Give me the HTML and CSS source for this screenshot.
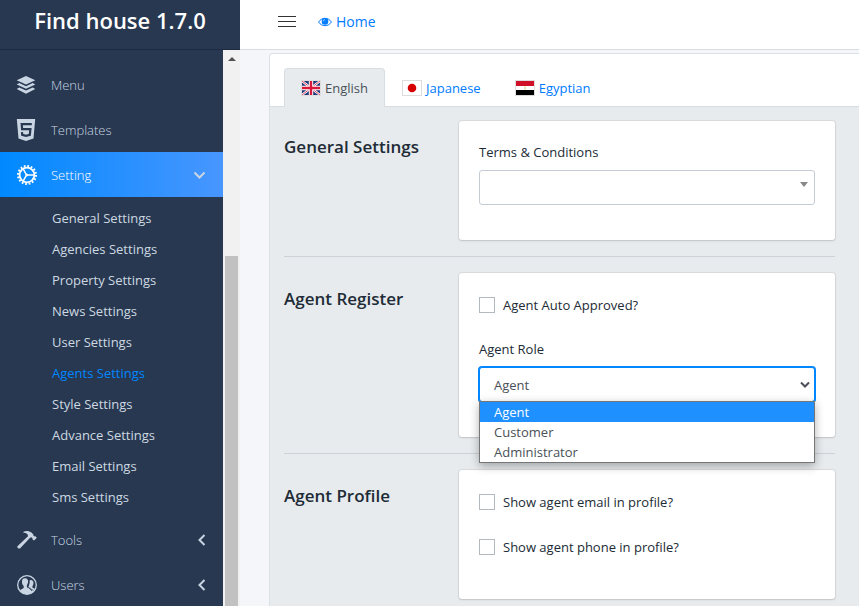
FILE: index.html
```html
<!DOCTYPE html>
<html lang="en">
<head>
<meta charset="utf-8">
<meta name="viewport" content="width=device-width, initial-scale=1">
<title>Find house 1.7.0</title>
<link rel="stylesheet" href="styles.css">
</head>
<body>
<div class="app">
  <aside class="sidebar">
    <a class="brand" href="#">Find house 1.7.0</a>
    <div class="sidebar-body">
      <nav class="nav">
        <a class="nav-item" href="#">
          <svg class="nav-icon" viewBox="0 0 20 20" fill="currentColor"><path d="M10 1l9.300 4.300L10 9.600.7 5.300zM3.300 8L10 11.200 16.700 8l2.600 1.500L10 13.800.7 9.500zM3.300 12.400L10 15.500l6.700-3.100 2.600 1.500L10 18.800.7 13.900z"/></svg>
          <span>Menu</span>
        </a>
        <a class="nav-item" href="#">
          <svg class="nav-icon" viewBox="0 0 20 22"><path fill="currentColor" d="M.8 0h18.400l-1.700 19.400L10 22l-7.500-2.600z"/><path fill="none" stroke="#273850" stroke-width="2.200" d="M15.800 5.200H5.700l.4 4.900h8.300l-.6 5.700-3.800 1.100-3.800-1.100-.2-2.600"/></svg>
          <span>Templates</span>
        </a>
        <a class="nav-item active" href="#">
          <svg class="nav-icon" viewBox="-1 0 20 20" fill="none" stroke="currentColor" overflow="visible"><circle cx="10" cy="10" r="7.400" stroke-width="1.800"/><circle cx="10" cy="10" r="9" stroke-width="2" stroke-dasharray="1.770 1.770"/><path stroke-width="1.500" d="M10.500 10H17M9.500 10L6.300 4.200M9.500 10l-3.200 5.800"/><circle cx="9.800" cy="10" r="1" fill="currentColor"/></svg>
          <span>Setting</span>
          <svg class="caret" viewBox="0 0 12 12"><path d="M-.5 3.500l5 5 5-5"/></svg>
        </a>
        <div class="subnav">
          <a href="#">General Settings</a>
          <a href="#">Agencies Settings</a>
          <a href="#">Property Settings</a>
          <a href="#">News Settings</a>
          <a href="#">User Settings</a>
          <a class="current" href="#">Agents Settings</a>
          <a href="#">Style Settings</a>
          <a href="#">Advance Settings</a>
          <a href="#">Email Settings</a>
          <a href="#">Sms Settings</a>
        </div>
        <a class="nav-item" href="#">
          <svg class="nav-icon" viewBox="-1 0 20 20" fill="currentColor" overflow="visible"><path d="M6.200 1.900C8.500.4 12 .5 14.500 2.600l1.800 1.900c.3.900.2 1.300.5 1.700.8.300 1.300 0 1.800.3l1.200 1.300-2.700 2.800-1.500-1.200c-.2-.8 0-1.200-.5-1.700-.6-.4-1.200-.2-1.800-.1L3.200 18.200c-.9.700-2.300.4-2.900-.9-.2-.5 0-1 .4-1.400L11 6.200c.2-1.900-1.200-3.500-4.800-3.800z"/></svg>
          <span>Tools</span>
          <svg class="caret" viewBox="0 0 12 12"><path d="M9.500 1l-5 5 5 5"/></svg>
        </a>
        <a class="nav-item" href="#">
          <svg class="nav-icon" viewBox="-1 0 20 20" overflow="visible"><circle cx="10" cy="10" r="9.300" fill="none" stroke="currentColor" stroke-width="1.300"/><path fill="currentColor" d="M8 3.200c2.200 0 3.200 1.500 3.100 3.600-.1 1.700-.8 2.600-1.200 3.600-.2 1.500.1 2 1.600 2.700l4.200 2.200 1.300 1c-3.600 3.900-10.400 3.900-14-.1.300-1.600 1.400-2 3.300-3 .8-.5.500-2-.1-3C5.100 9 4.900 7.700 5 6.400 5.100 4.300 6.100 3.200 8 3.200zM13.700 5c1.900 0 2.900 1.300 2.800 3.200-.1 1.500-.8 2.300-1.100 3.200-.1 1.100.3 1.400 1.200 1.900l1.400.8-.9 1.500-4.800-2.800c-.9-.6-.9-1.200-.4-2.400.7-1.500.9-2.700.7-4.900.3-.3.7-.5 1.100-.5z"/><path stroke="#273850" d="M12 12.500l3 3.400"/></svg>
          <span>Users</span>
          <svg class="caret" viewBox="0 0 12 12"><path d="M9.500 1l-5 5 5 5"/></svg>
        </a>
      </nav>
      <div class="scrollbar" aria-hidden="true">
        <div class="scroll-up"></div>
        <div class="scroll-thumb"></div>
      </div>
    </div>
  </aside>

  <div class="page">
    <header class="topbar">
      <button class="menu-toggle" type="button" aria-label="Toggle menu"><i></i><i></i><i></i></button>
      <a class="home" href="#">
        <svg class="eye" viewBox="0 0 14 10"><path fill="none" stroke="currentColor" d="M.6 5C3.500.1 10.500.1 13.400 5 10.500 9.900 3.500 9.900.6 5z"/><circle cx="7" cy="4.400" r="3.300" fill="currentColor"/><path fill="none" stroke="#fff" stroke-width=".6" d="M5.200 4.300Q5.300 2.600 7 2.500"/></svg>
        <span>Home</span>
      </a>
    </header>
    <main class="panel">
      <nav class="tabs">
        <a class="tab active" href="#">
          <svg class="flag" viewBox="0 0 18 14"><path fill="#223a7c" d="M0 0h18v14H0z"/><path stroke="#fff" stroke-width="2.200" d="M0 0l18 14M18 0L0 14"/><path stroke="#d22140" stroke-width=".8" d="M0 0l18 14M18 0L0 14"/><path stroke="#fff" stroke-width="4.400" d="M9 0v14M0 7h18"/><path stroke="#d8173a" stroke-width="2.400" d="M9 0v14M0 7h18"/></svg>
          <span>English</span>
        </a>
        <a class="tab" href="#">
          <svg class="flag" viewBox="0 0 18 14"><path fill="#fff" d="M0 0h18v14H0z"/><circle cx="9" cy="7" r="4.300" fill="#d60000"/></svg>
          <span>Japanese</span>
        </a>
        <a class="tab" href="#">
          <svg class="flag" viewBox="0 0 18 14"><path fill="#fff" d="M0 0h18v14H0z"/><path fill="#d01028" d="M0 0h18v5H0z"/><path fill="#000" d="M0 9h18v5H0z"/><path fill="#e8d59a" d="M8.300 5.500h1.400v3H8.300z"/></svg>
          <span>Egyptian</span>
        </a>
      </nav>
      <form class="sections">
        <section class="section">
          <h2>General Settings</h2>
          <div class="card">
            <div class="field">
              <label for="terms">Terms &amp; Conditions</label>
              <div class="select-wrap">
                <select id="terms"><option></option></select>
                <span class="triangle"></span>
              </div>
            </div>
          </div>
        </section>
        <section class="section">
          <h2>Agent Register</h2>
          <div class="card">
            <label class="check"><input type="checkbox"><span>Agent Auto Approved?</span></label>
            <div class="field">
              <label for="role">Agent Role</label>
              <div class="select-wrap">
                <select id="role" class="focused">
                  <option selected>Agent</option>
                  <option>Customer</option>
                  <option>Administrator</option>
                </select>
                <svg class="chevron" viewBox="0 0 10 8"><path d="M1 1.500l4 4 4-4"/></svg>
                <ul class="options" role="listbox" aria-label="Agent Role">
                  <li role="option" aria-selected="true">Agent</li>
                  <li role="option">Customer</li>
                  <li role="option">Administrator</li>
                </ul>
              </div>
            </div>
          </div>
        </section>
        <section class="section">
          <h2>Agent Profile</h2>
          <div class="card">
            <label class="check"><input type="checkbox"><span>Show agent email in profile?</span></label>
            <label class="check"><input type="checkbox"><span>Show agent phone in profile?</span></label>
          </div>
        </section>
      </form>
    </main>
  </div>
</div>
</body>
</html>
```

FILE: styles.css
```css
* { box-sizing: border-box; }

body {
  margin: 0;
  background: #f4f6f9;
  color: #212b36;
  font: 13px/22px "Open Sans", "Noto Sans", sans-serif;
}

a { color: #007bff; text-decoration: none; }

.app {
  display: flex;
  height: 100vh;
  overflow: hidden;
}

/* Sidebar */
.sidebar {
  display: flex;
  flex: 0 0 240px;
  flex-direction: column;
  background: #273850;
}

.brand {
  flex: none;
  height: 50px;
  border-bottom: 1px solid #1c2b41;
  color: #fff;
  font-size: 22px;
  font-weight: 600;
  line-height: 40px;
  text-align: center;
}

.sidebar-body {
  display: flex;
  flex: 1;
  min-height: 0;
}

.nav {
  flex: 1;
  padding-top: 12px;
  overflow: hidden;
}

.nav-item {
  display: flex;
  align-items: center;
  height: 45px;
  padding: 1px 16px 0;
  color: #c9d5e3;
  font-weight: 300;
}

.nav-item.active {
  background: linear-gradient(90deg, #0089ff, #4896ff);
  color: #fff;
}

.nav-icon {
  width: 20px;
  height: 22px;
  margin-right: 15px;
}

.caret {
  width: 12px;
  height: 12px;
  margin-left: auto;
  overflow: visible;
  fill: none;
  stroke: #c9d5e3;
  stroke-width: 2;
}

.subnav {
  display: flex;
  flex-direction: column;
  padding: 6px 0 4px 52px;
}

.subnav a {
  color: #ced8e2;
  line-height: 31px;
}

.subnav .current { color: #0087ff; }

.scrollbar {
  display: flex;
  flex: 0 0 17px;
  flex-direction: column;
  align-items: center;
  padding-top: 7px;
  background: #f1f1f1;
}

.scroll-up {
  border: solid transparent;
  border-width: 0 4px 4px;
  border-bottom-color: #505050;
}

.scroll-thumb {
  width: 13px;
  flex: 1;
  margin-top: 195px;
  background: #c1c1c1;
}

/* Page */
.page {
  display: flex;
  flex: 1;
  flex-direction: column;
  min-width: 0;
}

.topbar {
  display: flex;
  flex: none;
  align-items: center;
  gap: 22px;
  height: 50px;
  padding: 0 38px 6px;
  border-bottom: 1px solid #d9dde0;
  background: #fff;
}

.menu-toggle {
  display: flex;
  flex-direction: column;
  gap: 4px;
  width: 18px;
  padding: 0;
  border: 0;
  background: none;
}

.menu-toggle i {
  width: 100%;
  height: 1px;
  background: #333;
}

.home {
  display: flex;
  align-items: center;
  gap: 4px;
  font-size: 14px;
}

.eye { width: 14px; height: 10px; }

.panel {
  display: flex;
  flex: 1;
  flex-direction: column;
  margin: 3px 0 0 29px;
  border: solid #dce1e5;
  border-width: 1px 0 0 1px;
  border-top-left-radius: 4px;
  background: #fff;
}

.tabs {
  display: flex;
  flex: none;
  height: 53px;
  padding: 14px 14px 0;
  border-bottom: 1px solid #d8dde2;
}

.tab {
  display: flex;
  align-items: center;
  gap: 4px;
  height: 39px;
  padding: 0 16px;
  border: 1px solid transparent;
  border-bottom: 0;
  border-radius: 4px 4px 0 0;
}

.tab.active {
  border-color: #d8dde2;
  background: #e7ebee;
  color: #495057;
}

.flag {
  width: 20px;
  height: 16px;
  border: 1px solid #ddd;
}

.sections {
  flex: 1;
  padding: 14px 24px 14px 14px;
  background: #e7ebee;
}

.section {
  display: grid;
  grid-template-columns: 175px 1fr;
}

.section + .section {
  margin-top: 16px;
  padding-top: 16px;
  border-top: 1px solid #ccd3d8;
}

.section h2 {
  margin: 14px 0 0;
  font-size: 17px;
  font-weight: 600;
  line-height: 24px;
}

.card {
  padding: 20px 20px 19px;
  border-radius: 3px;
  background: #fff;
  box-shadow: 0 0 0 1px rgba(63, 63, 68, .08), 0 1px 2px rgba(63, 63, 68, .15);
}

.field {
  display: flex;
  flex-direction: column;
  gap: 7px;
  margin-bottom: 16px;
}

.select-wrap { position: relative; }

select {
  display: block;
  width: 100%;
  height: 35px;
  padding: 0 14px;
  border: 1px solid #c4cdd5;
  border-radius: 3px;
  background: #fff;
  color: #495057;
  font: inherit;
  appearance: none;
}

select.focused {
  border-color: #0087ff;
  box-shadow: 0 0 0 1px #0087ff;
}

.triangle {
  position: absolute;
  top: 12px;
  right: 7px;
  border: solid transparent;
  border-width: 5px 4px 0;
  border-top-color: #888;
}

.chevron {
  position: absolute;
  top: 14px;
  right: 5px;
  width: 10px;
  height: 8px;
  fill: none;
  stroke: #495057;
  stroke-width: 2;
}

.options {
  position: absolute;
  z-index: 1;
  top: 34px;
  left: 0;
  right: 0;
  margin: 0;
  padding: 0;
  border: 1px solid #767676;
  background: #fff;
  box-shadow: 0 3px 9px rgba(0, 0, 0, .3);
  color: #495057;
  line-height: 20px;
  list-style: none;
}

.options li { padding: 0 14px; }

.options [aria-selected="true"] {
  background: #1e90ff;
  color: #fff;
}

.check {
  display: flex;
  align-items: center;
  gap: 8px;
  height: 24px;
  margin-bottom: 21px;
}

.check input {
  width: 16px;
  height: 16px;
  margin: 0;
  border: 1px solid #b4b9be;
  background: #fff;
  appearance: none;
}
```
